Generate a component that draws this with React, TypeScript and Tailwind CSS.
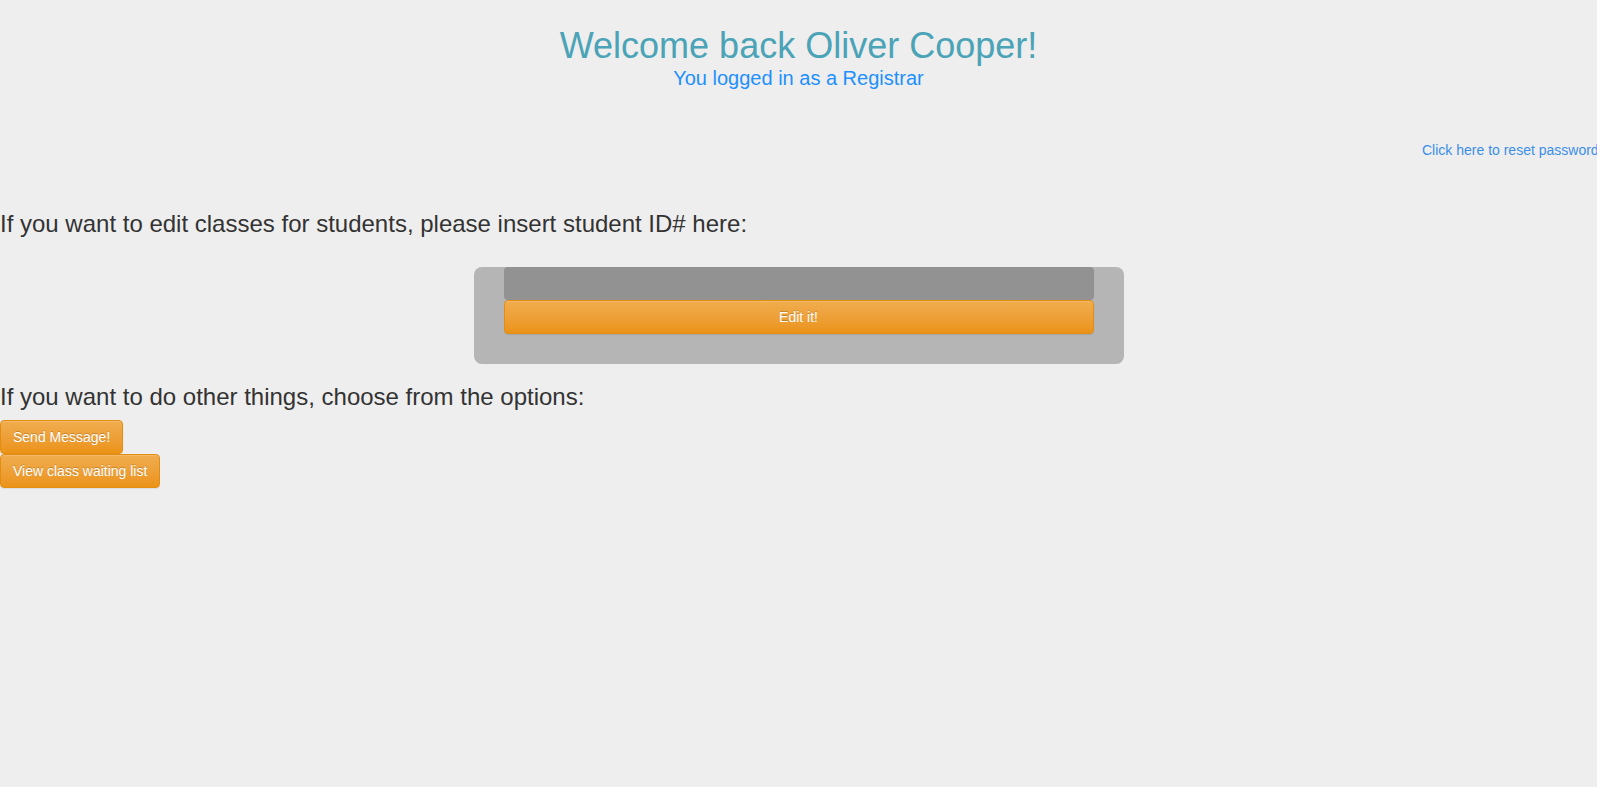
import { JSX, useState } from 'react';

const orangeBtn =
  'border border-[#e38d13] rounded-[4px] bg-gradient-to-b from-[#f0ad4e] to-[#eb9316] text-white text-[14px] leading-[20px] [text-shadow:0_-1px_0_rgba(0,0,0,0.2)] shadow-[inset_0_1px_0_rgba(255,255,255,0.15),0_1px_1px_rgba(0,0,0,0.075)]';

function App(): JSX.Element {
  const [studentId, setStudentId] = useState<string>('');

  return (
    <div className="min-h-screen w-full overflow-hidden bg-[#eeeeee] text-[#333333] font-['Liberation_Sans',Arial,sans-serif]">
      <div className="text-center">
        <h1 className="mt-[26px] text-[36px] leading-[40px] text-[#4aa3b6]">Welcome back Oliver Cooper!</h1>
        <p className="text-[20px] leading-[24px] text-[#1e90ff]">You logged in as a Registrar</p>
      </div>

      <div className="mt-[48px] pl-[1422px] whitespace-nowrap">
        <a href="#" className="text-[14px] leading-[20px] text-[#3b8ee8]">
          Click here to reset password
        </a>
      </div>

      <h3 className="mt-[49px] text-[24px] leading-[26px] whitespace-nowrap">
        If you want to edit classes for students, please insert student ID# here:
      </h3>

      <div className="mt-[30px] mx-auto w-[650px] rounded-[8px] bg-[#b5b5b5] px-[30px] pb-[30px]">
        <input
          value={studentId}
          onChange={e => setStudentId(e.target.value)}
          className="block w-full h-[33px] rounded-[4px] bg-[#939292] px-3 text-[14px] outline-none"
        />
        <button className={`${orangeBtn} block w-full h-[34px]`}>Edit it!</button>
      </div>

      <h3 className="mt-[20px] text-[24px] leading-[26px] whitespace-nowrap">
        If you want to do other things, choose from the options:
      </h3>

      <div className="mt-[10px] flex flex-col items-start">
        <button className={`${orangeBtn} h-[34px] px-[12px]`}>Send Message!</button>
        <button className={`${orangeBtn} h-[34px] px-[12px]`}>View class waiting list</button>
      </div>
    </div>
  );
}

export default App;
